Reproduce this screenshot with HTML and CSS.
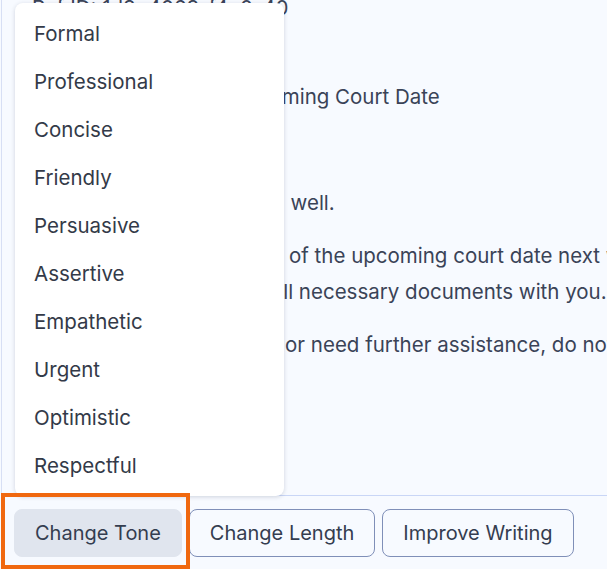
FILE: index.html
```html
<!DOCTYPE html>
<html>
<head>
<meta charset="utf-8">
<link rel="stylesheet" href="styles.css">
</head>
<body>
<div class="panel">
  <div class="editor">
    <div class="doc">
      <p>Ref ID: 1d8e4068-f4c0-40<br>Client: John Doe</p>
      <p>Subject: Reminder - Upcoming Court Date</p>
      <p>Dear John,</p>
      <p>I hope this email finds you well.</p>
      <p>I am writing to remind you of the upcoming court date next week.<br>Please ensure you bring all necessary documents with you.</p>
      <p>If you have any questions or need further assistance, do not hesitate to contact me.</p>
      <p>Best regards,<br>Jane Smith</p>
    </div>
  </div>
  <div class="toolbar">
    <button class="btn btn-active">Change Tone</button>
    <button class="btn">Change Length</button>
    <button class="btn">Improve Writing</button>
  </div>
  <ul class="menu">
    <li>Formal</li>
    <li>Professional</li>
    <li>Concise</li>
    <li>Friendly</li>
    <li>Persuasive</li>
    <li>Assertive</li>
    <li>Empathetic</li>
    <li>Urgent</li>
    <li>Optimistic</li>
    <li>Respectful</li>
  </ul>
  <div class="highlight"></div>
</div>
</body>
</html>
```
FILE: styles.css
```css
html, body {
  margin: 0;
  padding: 0;
}
body {
  width: 607px;
  height: 569px;
  overflow: hidden;
  background: #f7faff;
  font-family: Inter, "Noto Sans", sans-serif;
  color: #3a4357;
}
.panel {
  position: relative;
  margin-left: 1px;
  height: 569px;
  border-left: 1px solid #d7dff4;
}
.editor {
  height: 495px;
  overflow: hidden;
  border-bottom: 1px solid #c9d6f6;
}
.doc {
  margin-top: -10px;
  padding-left: 30px;
  width: 900px;
  font-size: 20.5px;
  line-height: 36px;
  white-space: nowrap;
}
.doc p {
  margin: 0 0 17px;
}
.toolbar {
  display: flex;
  gap: 7px;
  padding: 13px 12px;
}
.btn {
  font-family: Inter, "Noto Sans", sans-serif;
  font-size: 20px;
  color: #343d50;
  height: 48px;
  padding: 0 20px;
  border-radius: 8px;
  border: 1px solid #7f8fb8;
  background: transparent;
}
.btn-active {
  background: #e0e5ee;
  border-color: #e0e5ee;
}
.menu {
  position: absolute;
  left: 13px;
  top: 3px;
  width: 269px;
  margin: 0;
  padding: 7px 0 6px;
  list-style: none;
  background: #fff;
  border-radius: 8px;
  box-shadow: 0 1px 4px rgba(30, 40, 70, 0.18);
  font-size: 20.5px;
  color: #333a48;
}
.menu li {
  height: 48px;
  line-height: 48px;
  padding-left: 19px;
}
.highlight {
  position: absolute;
  left: -1px;
  top: 493px;
  width: 181px;
  height: 68px;
  border: 4px solid #f0680f;
}
```
